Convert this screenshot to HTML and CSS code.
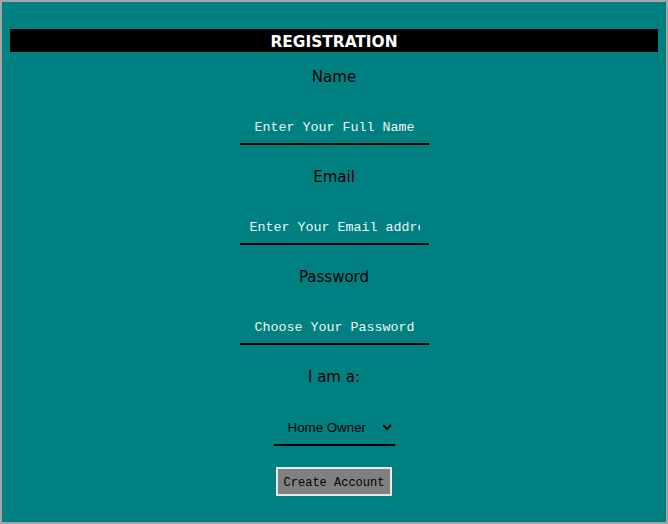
FILE: index.html
```html
<!DOCTYPE html>
<html>
<head>
<meta charset="utf-8">
<title>Registration</title>
<link rel="stylesheet" href="styles.css">
</head>
<body>
<div class="frame">
  <h1 class="title">REGISTRATION</h1>
  <form class="form">
    <label class="label" for="name">Name</label>
    <input class="field" id="name" type="text" placeholder="Enter Your Full Name">
    <label class="label" for="email">Email</label>
    <input class="field" id="email" type="email" placeholder="Enter Your Email address">
    <label class="label" for="pw">Password</label>
    <input class="field" id="pw" type="password" placeholder="Choose Your Password">
    <label class="label" for="role">I am a:</label>
    <select class="select" id="role">
      <option>Home Owner</option>
      <option>Tenant</option>
    </select>
    <button class="submit" type="button">Create Account</button>
  </form>
</div>
</body>
</html>
```
FILE: styles.css
```css
html, body {
  margin: 0;
  padding: 0;
}
.frame {
  box-sizing: border-box;
  width: 668px;
  height: 524px;
  border: 2px solid #a4a4a4;
  background: #008080;
  padding: 27px 8px 0;
}
.title {
  box-sizing: border-box;
  margin: 0;
  height: 23px;
  padding-top: 4px;
  line-height: 19px;
  background: #000;
  color: #fff;
  text-align: center;
  font-family: "DejaVu Sans", sans-serif;
  font-weight: bold;
  font-size: 15.4px;
}
.form {
  display: flex;
  flex-direction: column;
  align-items: center;
  padding-top: 13px;
}
.label {
  height: 24px;
  line-height: 24px;
  font-family: "DejaVu Sans", sans-serif;
  font-size: 15px;
  color: #000;
  margin-bottom: 19px;
}
.field {
  box-sizing: border-box;
  width: 189px;
  height: 37px;
  margin: 0 0 20px;
  padding: 4px 9px 0 10px;
  border: none;
  border-bottom: 2px solid #000;
  background: transparent;
  font-family: "Liberation Mono", monospace;
  font-size: 13.33px;
  text-align: center;
  color: #fff;
  outline: none;
}
.field::placeholder {
  color: #eef6f6;
  opacity: 1;
}
.select {
  box-sizing: border-box;
  width: 121px;
  height: 38px;
  margin: 0 0 21px;
  padding: 2px 8px 0 10px;
  border: none;
  border-bottom: 2px solid #000;
  background: transparent;
  font-family: "Liberation Sans", sans-serif;
  font-size: 13.33px;
  color: #000;
  outline: none;
}
.submit {
  box-sizing: border-box;
  width: 116px;
  height: 29px;
  padding: 2px 0 0;
  border: 2px solid #e8e8e8;
  background: #808080;
  font-family: "Liberation Mono", monospace;
  font-size: 12px;
  color: #000;
}
```
